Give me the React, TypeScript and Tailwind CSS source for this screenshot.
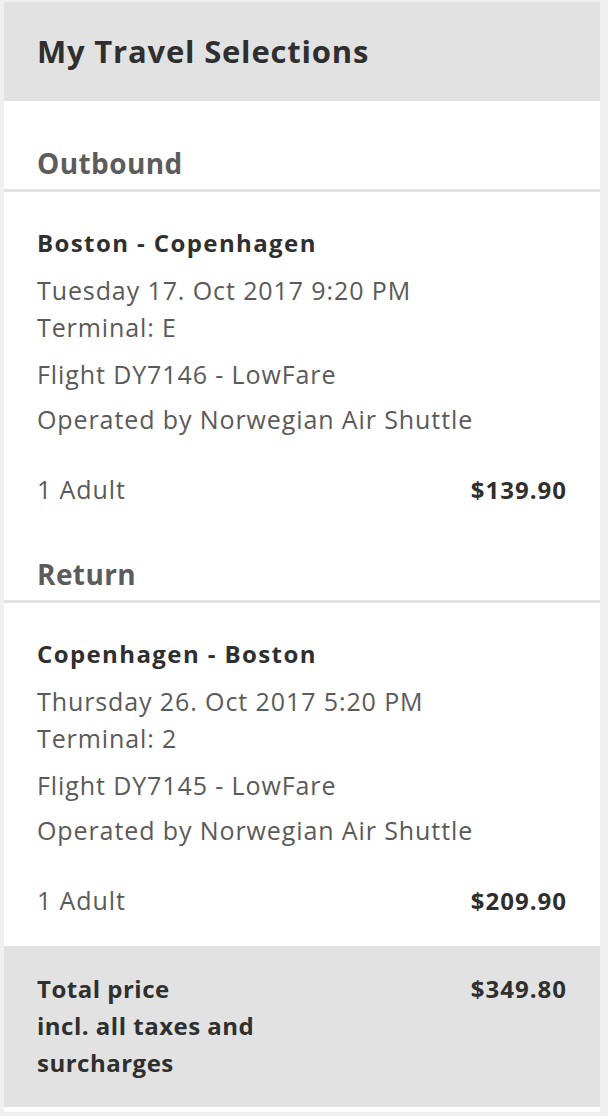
import React from 'react';

type Leg = {
  label: string;
  route: string;
  date: string;
  terminal: string;
  flight: string;
  operator: string;
  pax: string;
  price: string;
};

const legs: Leg[] = [
  {
    label: 'Outbound',
    route: 'Boston - Copenhagen',
    date: 'Tuesday 17. Oct 2017 9:20 PM',
    terminal: 'Terminal: E',
    flight: 'Flight DY7146 - LowFare',
    operator: 'Operated by Norwegian Air Shuttle',
    pax: '1 Adult',
    price: '$139.90',
  },
  {
    label: 'Return',
    route: 'Copenhagen - Boston',
    date: 'Thursday 26. Oct 2017 5:20 PM',
    terminal: 'Terminal: 2',
    flight: 'Flight DY7145 - LowFare',
    operator: 'Operated by Norwegian Air Shuttle',
    pax: '1 Adult',
    price: '$209.90',
  },
];

const LegBlock: React.FC<{ leg: Leg; first: boolean }> = ({ leg, first }) => (
  <section>
    <h3 className={`px-[33px] text-[28px] font-bold leading-[34px] tracking-[0.4px] text-[#5c5c5c] pb-[9px] ${first ? 'pt-[45px]' : 'pt-[49px]'}`}>
      {leg.label}
    </h3>
    <div className="h-[3px] bg-[#e2e2e2]" />
    <div className="px-[33px] pt-[36px]">
      <div className="text-[24px] font-bold leading-[30px] tracking-[1.4px] text-[#2f2f2f]">{leg.route}</div>
      <div className="mt-[14px] text-[25px] leading-[37px] tracking-[0.9px] text-[#5a5a5a]">
        <div>{leg.date}</div>
        <div>{leg.terminal}</div>
        <div className="mt-[10px]">{leg.flight}</div>
        <div className="mt-[8px]">{leg.operator}</div>
      </div>
      <div className="mt-[33px] flex items-center justify-between text-[25px] leading-[37px] tracking-[0.9px]">
        <span className="text-[#5a5a5a]">{leg.pax}</span>
        <span className="text-[24px] font-bold tracking-[1px] text-[#2f2f2f]">{leg.price}</span>
      </div>
    </div>
  </section>
);

export default function App() {
  return (
    <div className="min-h-[1116px] w-[608px] bg-[#f0f0f0] pt-[2px] font-['Open_Sans',sans-serif]">
      <div className="ml-[4px] w-[596px] bg-white">
        <header className="h-[99px] bg-[#e2e2e2] px-[33px] flex items-center">
          <h2 className="text-[31px] font-bold tracking-[0.8px] text-[#2f2f2f] leading-none">My Travel Selections</h2>
        </header>
        {legs.map((leg, i) => (
          <LegBlock key={leg.label} leg={leg} first={i === 0} />
        ))}
        <div className="mt-[27px] flex justify-between bg-[#e2e2e2] px-[33px] pt-[24px] pb-[26px] text-[24px] font-bold leading-[37px] tracking-[0.5px] text-[#2f2f2f]">
          <div>
            Total price
            <br />
            incl. all taxes and
            <br />
            surcharges
          </div>
          <div className="tracking-[1px]">$349.80</div>
        </div>
        <div className="h-[5px] bg-white" />
      </div>
    </div>
  );
}
